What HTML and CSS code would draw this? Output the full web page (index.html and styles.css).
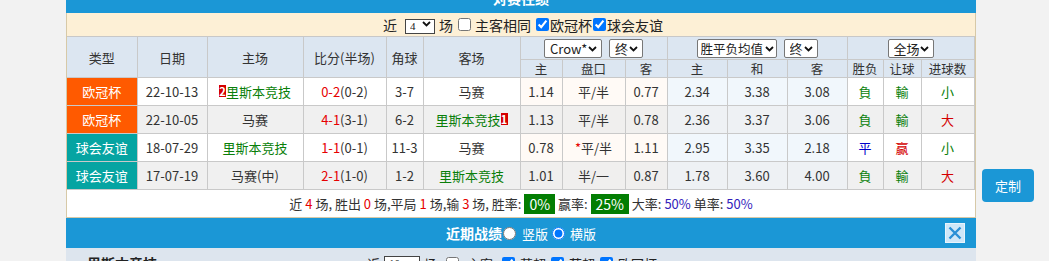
FILE: index.html
```html
<!DOCTYPE html>
<html lang="zh-CN">
<head>
<meta charset="utf-8">
<title>对赛往绩</title>
<link rel="stylesheet" href="styles.css">
</head>
<body>
<div class="page">
  <div class="panel">
    <div class="title-bar">对赛往绩</div>
    <div class="box">
      <div class="filter-bar">
        <span>近</span>
        <span class="dd small"><select><option>4</option></select><svg width="9" height="6" viewBox="0 0 9 6"><path d="M1 1 L4.5 4.5 L8 1" fill="none" stroke="#111" stroke-width="1.8"/></svg></span>
        <span>场</span>
        <input type="checkbox" class="chk">
        <span class="lbl">主客相同</span>
        <input type="checkbox" class="chk c2" checked><span>欧冠杯</span><input type="checkbox" class="chk c3" checked><span>球会友谊</span>
      </div>
      <table class="hist">
        <colgroup>
          <col style="width:70px"><col style="width:70px"><col style="width:96px"><col style="width:83px"><col style="width:37px"><col style="width:97px">
          <col style="width:42px"><col style="width:63px"><col style="width:42px">
          <col style="width:60px"><col style="width:60px"><col style="width:60px">
          <col style="width:36px"><col style="width:38px"><col style="width:53px">
        </colgroup>
        <thead>
          <tr class="h1">
            <th rowspan="2">类型</th>
            <th rowspan="2">日期</th>
            <th rowspan="2">主场</th>
            <th rowspan="2">比分(半场)</th>
            <th rowspan="2">角球</th>
            <th rowspan="2">客场</th>
            <th colspan="3"><span class="dd w58"><select><option>Crow*</option></select><svg width="9" height="6" viewBox="0 0 9 6"><path d="M1 1 L4.5 4.5 L8 1" fill="none" stroke="#111" stroke-width="1.8"/></svg></span><span class="dd w34"><select><option>终</option></select><svg width="9" height="6" viewBox="0 0 9 6"><path d="M1 1 L4.5 4.5 L8 1" fill="none" stroke="#111" stroke-width="1.8"/></svg></span></th>
            <th colspan="3"><span class="dd w80"><select><option>胜平负均值</option></select><svg width="9" height="6" viewBox="0 0 9 6"><path d="M1 1 L4.5 4.5 L8 1" fill="none" stroke="#111" stroke-width="1.8"/></svg></span><span class="dd w34"><select><option>终</option></select><svg width="9" height="6" viewBox="0 0 9 6"><path d="M1 1 L4.5 4.5 L8 1" fill="none" stroke="#111" stroke-width="1.8"/></svg></span></th>
            <th colspan="3"><span class="dd w46"><select><option>全场</option></select><svg width="9" height="6" viewBox="0 0 9 6"><path d="M1 1 L4.5 4.5 L8 1" fill="none" stroke="#111" stroke-width="1.8"/></svg></span></th>
          </tr>
          <tr class="h2">
            <th>主</th><th>盘口</th><th>客</th>
            <th>主</th><th>和</th><th>客</th>
            <th>胜负</th><th>让球</th><th>进球数</th>
          </tr>
        </thead>
        <tbody>
          <tr class="odd">
            <td class="type ucl">欧冠杯</td>
            <td>22-10-13</td>
            <td><span class="rank">2</span><span class="green">里斯本竞技</span></td>
            <td><span class="red">0-2</span>(0-2)</td>
            <td>3-7</td>
            <td>马赛</td>
            <td class="o1">1.14</td><td class="o1">平/半</td><td class="o1">0.77</td>
            <td class="o2">2.34</td><td class="o2">3.38</td><td class="o2">3.08</td>
            <td class="green">負</td><td class="green">輸</td><td class="green">小</td>
          </tr>
          <tr class="even">
            <td class="type ucl">欧冠杯</td>
            <td>22-10-05</td>
            <td>马赛</td>
            <td><span class="red">4-1</span>(3-1)</td>
            <td>6-2</td>
            <td><span class="green">里斯本竞技</span><span class="rank">1</span></td>
            <td class="o1">1.13</td><td class="o1">平/半</td><td class="o1">0.78</td>
            <td class="o2">2.36</td><td class="o2">3.37</td><td class="o2">3.06</td>
            <td class="green">負</td><td class="green">輸</td><td class="red2">大</td>
          </tr>
          <tr class="odd">
            <td class="type club">球会友谊</td>
            <td>18-07-29</td>
            <td><span class="green">里斯本竞技</span></td>
            <td><span class="red">1-1</span>(0-1)</td>
            <td>11-3</td>
            <td>马赛</td>
            <td class="o1">0.78</td><td class="o1"><span class="red">*</span>平/半</td><td class="o1">1.11</td>
            <td class="o2">2.95</td><td class="o2">3.35</td><td class="o2">2.18</td>
            <td class="blue">平</td><td class="red2">赢</td><td class="green">小</td>
          </tr>
          <tr class="even">
            <td class="type club">球会友谊</td>
            <td>17-07-19</td>
            <td>马赛(中)</td>
            <td><span class="red">2-1</span>(1-0)</td>
            <td>1-2</td>
            <td><span class="green">里斯本竞技</span></td>
            <td class="o1">1.01</td><td class="o1">半/一</td><td class="o1">0.87</td>
            <td class="o2">1.78</td><td class="o2">3.60</td><td class="o2">4.00</td>
            <td class="green">負</td><td class="green">輸</td><td class="red2">大</td>
          </tr>
        </tbody>
      </table>
      <div class="summary">近 <span class="red">4</span> 场, 胜出 <span class="red">0</span> 场,平局 <span class="red">1</span> 场,输 <span class="red">3</span> 场, 胜率: <span class="pill">0%</span> 赢率: <span class="pill">25%</span> 大率: <span class="rate">50%</span> 单率: <span class="rate">50%</span></div>
    </div>
    <div class="bar2">
      <div class="bar2-side"></div>
      <div class="bar2-mid">
        <span class="bar2-title">近期战绩</span><input type="radio" name="v" class="rad first"><span>竖版</span>
        <input type="radio" name="v" class="rad" checked><span>横版</span>
      </div>
      <div class="bar2-side right">
        <span class="close">
          <svg width="20" height="20" viewBox="0 0 20 20"><rect x="0.5" y="0.5" width="19" height="19" fill="#cfe7f8" stroke="#e8f4fc"/><path d="M4.5 4.5 L15.5 15.5 M15.5 4.5 L4.5 15.5" stroke="#2a8fd6" stroke-width="2.4"/></svg>
        </span>
      </div>
    </div>
    <div class="sub-row">
      <span class="sub-title">里斯本竞技</span>
      <span class="sub-ctrl">近 <span class="dd small w36"><select><option>10</option></select><svg width="9" height="6" viewBox="0 0 9 6"><path d="M1 1 L4.5 4.5 L8 1" fill="none" stroke="#111" stroke-width="1.8"/></svg></span> 场 <input type="checkbox" class="chk"> 主客 <input type="checkbox" class="chk c2" checked>英超<input type="checkbox" class="chk c3" checked>葡超<input type="checkbox" class="chk c3" checked>欧冠杯</span>
    </div>
  </div>
  <button class="custom">定制</button>
</div>
</body>
</html>
```
FILE: styles.css
```css
html, body {
  margin: 0;
  padding: 0;
  background: #f2f2f2;
  font-family: "Noto Sans CJK SC", "Noto Sans", sans-serif;
  color: #333;
  overflow: hidden;
}
.page {
  display: flex;
  align-items: flex-start;
  margin-top: -17px;
  padding-left: 66px;
}
.panel {
  width: 910px;
  display: flex;
  flex-direction: column;
}
.title-bar {
  height: 30px;
  line-height: 30px;
  background: #1b97d6;
  color: #fff;
  font-weight: bold;
  font-size: 14px;
  text-align: center;
}
.box {
  border-left: 1px solid #d7c9a7;
  border-right: 1px solid #d7c9a7;
  border-bottom: 1px solid #d7c9a7;
  background: #fff;
}
.filter-bar {
  height: 24px;
  background: #fdf0d6;
  display: flex;
  align-items: center;
  justify-content: center;
  font-size: 14px;
  color: #222;
  border-bottom: 1px solid #c8c8c8;
  box-sizing: border-box;
  padding-left: 4px;
}
.filter-bar span { line-height: 16px; }
.filter-bar .dd { margin: 0 4px 0 8px; }
.chk {
  width: 13px;
  height: 13px;
  margin: 0 4px 0 5px;
}
.chk.c2 { margin: 0 1px 0 5px; }
.chk.c3 { margin: 0 1px 0 1px; }
.dd {
  position: relative;
  display: inline-block;
  vertical-align: middle;
  line-height: 0;
}
.dd select {
  appearance: none;
  -webkit-appearance: none;
  height: 19px;
  width: 100%;
  padding: 0 0 0 5px;
  font-size: 13px;
  font-family: "Noto Sans CJK SC", sans-serif;
  border: 1px solid #777;
  border-radius: 2px;
  background: #fff;
  color: #222;
  line-height: 17px;
}
.dd svg {
  position: absolute;
  right: 5px;
  top: 7px;
  pointer-events: none;
}
.dd.small { width: 30px; }
.dd.small select {
  height: 15px;
  font-size: 11px;
  line-height: 13px;
  font-family: "Liberation Serif", serif;
  padding-left: 4px;
  border: 1px solid #444;
  border-radius: 0;
}
.dd.small svg { top: 5px; right: 4px; }
.dd.w36 { width: 36px; }
.w58 { width: 58px; margin-right: 7px; }
.w34 { width: 34px; }
.w80 { width: 80px; margin-right: 7px; }
.w80 select { font-size: 12.5px; padding-left: 3px; }
.w80 svg { right: 3px; }
.w46 { width: 46px; }
.hist {
  width: 907px;
  table-layout: fixed;
  border-collapse: collapse;
  font-size: 12px;
}
.hist th, .hist td {
  border: 1px solid #c9c9c9;
  text-align: center;
  padding: 0;
  white-space: nowrap;
  overflow: hidden;
}
.hist tr:first-child th { border-top: none; }
.hist tr th:first-child, .hist tr td:first-child { border-left: none; }
.hist thead th {
  background: #dce6f1;
  font-weight: normal;
  color: #333;
  font-size: 13px;
}
.hist .h1 th { height: 22px; }
.hist .h2 th { height: 17px; line-height: 17px; font-size: 12.5px; }
.hist tbody td {
  height: 27px;
  font-size: 13px;
  color: #333;
}
.hist tr.odd td { background: #fff; }
.hist tr.even td { background: #f0f0f0; }
.hist tr.odd td.o1 { background: #fffaf6; }
.hist tr.odd td.o2 { background: #f1f7fc; }
.hist tr.even td.o1 { background: #f0efee; }
.hist tr.even td.o2 { background: #eef1f4; }
.hist td.type { color: #fff; }
.hist tr td.ucl { background: #ff5a00; }
.hist tr td.club { background: #05a4a2; }
.green, .hist td.green { color: #0a7f0a; }
.red { color: #e60000; }
.hist td.red2 { color: #d40000; }
.hist td.blue { color: #0000cc; }
.rank {
  display: inline-block;
  background: #d50000;
  color: #fff;
  font-size: 11px;
  font-weight: bold;
  line-height: 12px;
  width: 7px;
  text-align: center;
  vertical-align: 1px;
}
.summary {
  height: 27px;
  line-height: 27px;
  text-align: center;
  font-size: 13px;
  color: #333;
  white-space: nowrap;
}
.pill {
  display: inline-block;
  background: #027d02;
  color: #fff;
  padding: 0 5px;
  height: 20px;
  line-height: 20px;
  font-size: 14px;
  vertical-align: middle;
  position: relative;
  top: -1px;
}
.rate { color: #3322bb; font-size: 13px; }
.bar2 {
  height: 30px;
  background: #1b97d6;
  display: grid;
  grid-template-columns: 1fr auto 1fr;
  align-items: center;
  color: #fff;
}
.bar2-mid {
  display: flex;
  align-items: center;
  font-size: 13px;
}
.bar2-title { font-weight: bold; font-size: 14px; }
.rad {
  width: 13px;
  height: 13px;
  margin: 0 5px 0 4px;
}
.rad.first { margin: 0 6px 0 1px; }
.bar2-side.right {
  display: flex;
  justify-content: flex-end;
  padding-right: 11px;
}
.close { display: block; width: 20px; height: 20px; }
.close svg { display: block; }
.sub-row {
  height: 30px;
  background: #dde5ee;
  display: flex;
  align-items: center;
  font-size: 13px;
  padding-left: 21px;
}
.sub-title { font-weight: bold; color: #222; width: 280px; font-size: 14px; }
.sub-ctrl { display: flex; align-items: center; gap: 4px; color: #222; }
.custom {
  margin-left: 6px;
  margin-top: 186px;
  width: 52px;
  height: 33px;
  background: #1b97d6;
  color: #fff;
  border: none;
  border-radius: 4px;
  font-size: 13px;
  font-family: "Noto Sans CJK SC", sans-serif;
  padding: 0;
}
```
